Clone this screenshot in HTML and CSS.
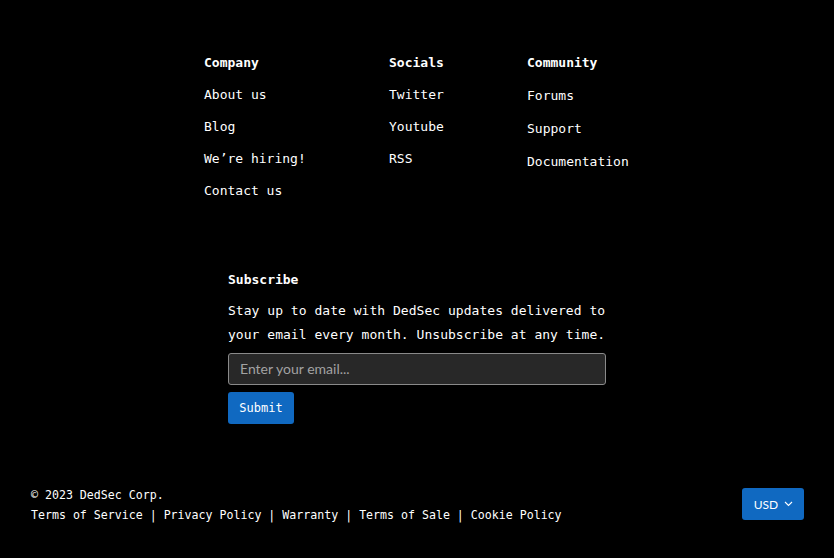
FILE: index.html
```html
<!DOCTYPE html>
<html lang="en">
<head>
<meta charset="utf-8">
<title>DedSec Footer</title>
<link rel="stylesheet" href="styles.css">
</head>
<body>
<footer class="footer">
  <nav class="nav">
    <div class="col col-company">
      <h3 class="col-title">Company</h3>
      <a class="link" href="#">About us</a>
      <a class="link" href="#">Blog</a>
      <a class="link" href="#">We’re hiring!</a>
      <a class="link" href="#">Contact us</a>
    </div>
    <div class="col col-socials">
      <h3 class="col-title">Socials</h3>
      <a class="link" href="#">Twitter</a>
      <a class="link" href="#">Youtube</a>
      <a class="link" href="#">RSS</a>
    </div>
    <div class="col col-community">
      <h3 class="col-title">Community</h3>
      <a class="link link-tall" href="#">Forums</a>
      <a class="link link-tall" href="#">Support</a>
      <a class="link link-tall" href="#">Documentation</a>
    </div>
  </nav>

  <section class="subscribe">
    <h3 class="sub-title">Subscribe</h3>
    <p class="sub-text">Stay up to date with DedSec updates delivered to your email every month. Unsubscribe at any time.</p>
    <form class="sub-form">
      <input class="sub-input" type="email" placeholder="Enter your email...">
      <button class="sub-btn" type="button">Submit</button>
    </form>
  </section>

  <div class="bottom">
    <div class="legal">
      <div class="copy">© 2023 DedSec Corp.</div>
      <div class="policies">
        <a href="#">Terms of Service</a> | <a href="#">Privacy Policy</a> | <a href="#">Warranty</a> | <a href="#">Terms of Sale</a> | <a href="#">Cookie Policy</a>
      </div>
    </div>
    <button class="currency" type="button">USD
      <svg class="chev" width="9" height="6" viewBox="0 0 9 6" aria-hidden="true"><path d="M1 1l3.5 3.5L8 1" fill="none" stroke="#fff" stroke-width="1.1"/></svg>
    </button>
  </div>
</footer>
</body>
</html>
```

FILE: styles.css
```css
* { box-sizing: border-box; }

html, body {
  margin: 0;
  padding: 0;
  background: #000;
  color: #fff;
  font-family: "DejaVu Sans Mono", "Liberation Mono", monospace;
}

body { width: 834px; height: 558px; overflow: hidden; }

.footer {
  display: flex;
  flex-direction: column;
  height: 558px;
}

.nav {
  display: flex;
  justify-content: center;
  padding-top: 53px;
}

.col {
  display: flex;
  flex-direction: column;
  gap: 12px;
}

.col-company { width: 185px; }
.col-socials { width: 138px; }
.col-community { width: 103px; }

.col-title {
  margin: 0;
  font-size: 13px;
  line-height: 20px;
  font-weight: bold;
}

.link {
  color: #fff;
  text-decoration: none;
  font-size: 13px;
  line-height: 20px;
  white-space: nowrap;
}

.link-tall { line-height: 21px; }

.subscribe {
  width: 378px;
  margin: 69px auto 0;
}

.sub-title {
  margin: 0;
  font-size: 13px;
  line-height: 20px;
  font-weight: bold;
}

.sub-text {
  margin: 9px 0 0;
  font-size: 13px;
  line-height: 24px;
  letter-spacing: 0.03px;
}

.sub-form {
  display: flex;
  flex-direction: column;
  align-items: flex-start;
  gap: 7px;
  margin-top: 6px;
}

.sub-input {
  width: 378px;
  height: 32px;
  background: #282828;
  border: 1px solid #8a8a8a;
  border-radius: 3px;
  padding: 0 11px 2px;
  font-family: "Lato", "Noto Sans", sans-serif;
  font-size: 14px;
  color: #fff;
  outline: none;
}

.sub-input::placeholder { color: #a2a2a2; }

.sub-btn {
  width: 66px;
  height: 32px;
  background: #1069c1;
  border: none;
  border-radius: 3px;
  color: #fff;
  font-family: "DejaVu Sans Mono", "Liberation Mono", monospace;
  font-size: 12px;
  padding: 0;
}

.bottom {
  margin-top: auto;
  display: flex;
  justify-content: space-between;
  align-items: flex-start;
  padding: 0 30px 33px 31px;
}

.legal {
  font-size: 11.6px;
  line-height: 20px;
}

.policies a { color: #fff; text-decoration: none; }

.currency {
  margin-top: 3px;
  width: 62px;
  height: 32px;
  background: #1069c1;
  border: none;
  border-radius: 3px;
  color: #fff;
  font-family: "Lato", "Noto Sans", sans-serif;
  font-size: 12px;
  display: flex;
  align-items: center;
  justify-content: center;
  gap: 6px;
  padding: 0 0 0 1px;
}

.chev { display: block; }
```
